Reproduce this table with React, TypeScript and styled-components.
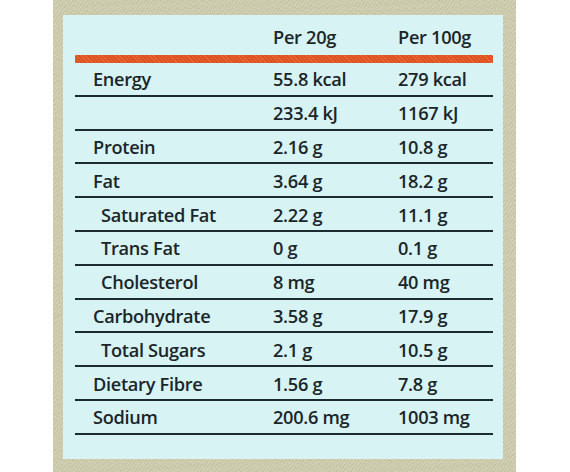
import React from 'react';
import styled, { createGlobalStyle } from 'styled-components';

const GlobalStyle = createGlobalStyle`
    html, body {
        margin: 0;
        padding: 0;
        background: #ffffff;
    }
    body {
        font-family: 'Open Sans', 'Liberation Sans', sans-serif;
    }
`;

const Page = styled.div`
    width: 570px;
    height: 472px;
    display: flex;
    padding-left: 53px;
    box-sizing: border-box;
    background: #ffffff;
    overflow: hidden;
`;

// beige printed carton around the label
const Frame = styled.div`
    width: 463px;
    height: 472px;
    padding: 15px 13px 13px 10px;
    box-sizing: border-box;
    background-color: #cbc9ab;
    background-image:
        repeating-linear-gradient(35deg, rgba(255, 255, 235, 0.18) 0 1px, transparent 1px 2px),
        repeating-linear-gradient(-55deg, rgba(110, 100, 60, 0.10) 0 1px, transparent 1px 3px);
`;

const Panel = styled.div`
    height: 100%;
    background: #d8f3f4;
    padding: 0 10px 0 12px;
    box-sizing: border-box;
    display: flex;
    flex-direction: column;
`;

const HeaderRow = styled.div`
    display: grid;
    grid-template-columns: 198px 125px 1fr;
    height: 40px;
    align-items: center;
    padding-top: 4px;
    box-sizing: border-box;
`;

const OrangeBar = styled.div`
    height: 8px;
    background-color: #dd5220;
    background-image: repeating-linear-gradient(45deg, rgba(255, 150, 90, 0.3) 0 1px, transparent 1px 3px);
    border-radius: 1px;
`;

const Row = styled.div`
    display: grid;
    grid-template-columns: 198px 125px 1fr;
    height: 33.8px;
    align-items: center;
    border-bottom: 2px solid #1c2b30;
    box-sizing: border-box;
    padding-top: 1px;
`;

const Cell = styled.div<{ $indent?: boolean }>`
    font-size: 18.2px;
    font-weight: 600;
    color: #1a2629;
    letter-spacing: -0.3px;
    padding-left: ${props => (props.$indent ? '26px' : '18px')};
    white-space: nowrap;
`;

const Value = styled.div`
    font-size: 18.2px;
    font-weight: 600;
    color: #1a2629;
    letter-spacing: -0.3px;
    white-space: nowrap;
`;

interface Nutrient {
    name: string;
    per20: string;
    per100: string;
    indent?: boolean;
}

const nutrients: Nutrient[] = [
    { name: 'Energy', per20: '55.8 kcal', per100: '279 kcal' },
    { name: '', per20: '233.4 kJ', per100: '1167 kJ' },
    { name: 'Protein', per20: '2.16 g', per100: '10.8 g' },
    { name: 'Fat', per20: '3.64 g', per100: '18.2 g' },
    { name: 'Saturated Fat', per20: '2.22 g', per100: '11.1 g', indent: true },
    { name: 'Trans Fat', per20: '0 g', per100: '0.1 g', indent: true },
    { name: 'Cholesterol', per20: '8 mg', per100: '40 mg', indent: true },
    { name: 'Carbohydrate', per20: '3.58 g', per100: '17.9 g' },
    { name: 'Total Sugars', per20: '2.1 g', per100: '10.5 g', indent: true },
    { name: 'Dietary Fibre', per20: '1.56 g', per100: '7.8 g' },
    { name: 'Sodium', per20: '200.6 mg', per100: '1003 mg' }
];

const App: React.FC = () => {
    return (
        <Page>
            <GlobalStyle />
            <Frame>
                <Panel>
                    <HeaderRow>
                        <Cell />
                        <Value>Per 20g</Value>
                        <Value>Per 100g</Value>
                    </HeaderRow>
                    <OrangeBar />
                    {nutrients.map((n, i) => (
                        <Row key={i}>
                            <Cell $indent={n.indent}>{n.name}</Cell>
                            <Value>{n.per20}</Value>
                            <Value>{n.per100}</Value>
                        </Row>
                    ))}
                </Panel>
            </Frame>
        </Page>
    );
};

export default App;
